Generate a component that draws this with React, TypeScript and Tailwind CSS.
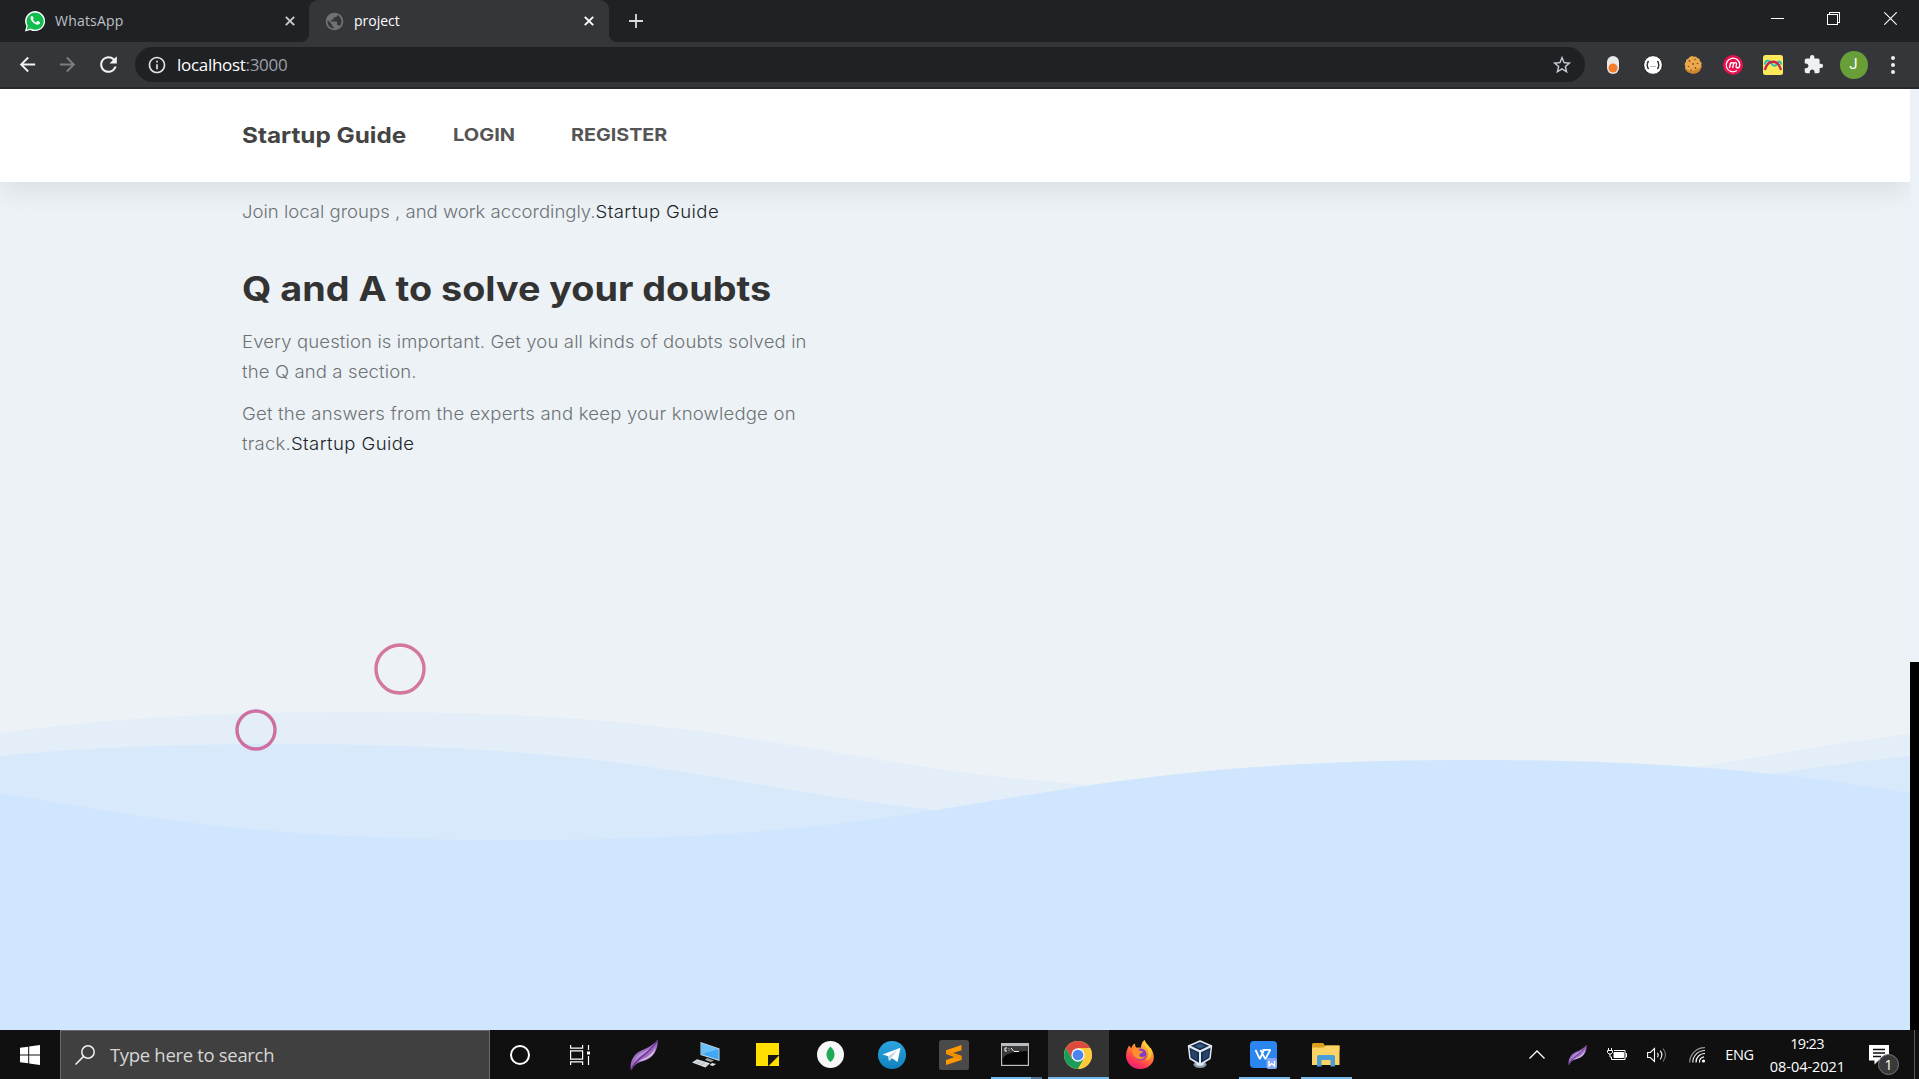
import type { ReactNode } from "react";
import { MdArrowBack, MdArrowForward, MdExtension, MdOutlineInfo, MdPublic, MdRefresh, MdStarBorder } from "react-icons/md";

function TabClose({ color }: { color: string }) {
  return (
    <svg viewBox="0 0 10 10" className="size-[10px]" stroke={color} strokeWidth="1.9">
      <path d="M.8 .8l8.4 8.4M9.2 .8L.8 9.2" />
    </svg>
  );
}

function TabStrip() {
  return (
    <div className="flex h-[42px] bg-[#202124]">
      <div className="flex w-[309px] items-center pl-[24px] pr-[14px]">
        <svg viewBox="0 0 22 22" className="size-[22px]">
          <path d="M1 21.5l1.4-5.4A10 10 0 1 1 6.300 19.900z" fill="#fff" />
          <path d="M2.700 19.700l1.1-4A8.600 8.600 0 1 1 6.700 18.600z" fill="#12bd4e" />
          <path d="M7.300 6.200c.5-.5 1.200-.4 1.500.2l.7 1.600c.2.500-.2 1-.6 1.400.7 1.400 1.800 2.400 3.200 3l1-1.100c.3-.4.700-.4 1.100-.2l1.500.8c.5.300.4.800.2 1.300-.6 1.400-2.300 1.700-3.600 1.200-2.700-1-4.700-2.900-5.600-5.300-.4-1.100-.1-2.200.6-2.900z" fill="#fff" />
        </svg>
        <span className="ml-[9px] flex-1 pb-px text-[14px] tracking-[0.2px] text-[#bdc1c6]">WhatsApp</span>
        <TabClose color="#c8cacd" />
      </div>
      <div className="relative flex w-[300px] items-center rounded-t-[9px] bg-[#35363a] pl-[15px] pr-[15px]">
        <svg viewBox="0 0 8 8" className="absolute bottom-0 -left-2 size-2"><path d="M8 0v8H0a8 8 0 0 0 8-8z" fill="#35363a" /></svg>
        <svg viewBox="0 0 8 8" className="absolute bottom-0 -right-2 size-2"><path d="M0 0v8h8a8 8 0 0 1-8-8z" fill="#35363a" /></svg>
        <MdPublic className="size-[21px] text-[#6f7174]" />
        <span className="ml-[9px] flex-1 pb-px text-[14px] text-white">project</span>
        <TabClose color="#fff" />
      </div>
      <div className="flex w-[54px] items-center justify-center">
        <svg viewBox="0 0 14 14" className="size-[14px]" stroke="#dadce0" strokeWidth="1.800"><path d="M7 0v14M0 7h14" /></svg>
      </div>
      <div className="ml-auto flex h-[36px] items-center">
        <div className="flex w-[56px] justify-center"><div className="h-px w-[13px] bg-white" /></div>
        <div className="flex w-[57px] justify-center">
          <svg viewBox="0 0 13 13" className="size-[13px]" fill="none" stroke="#fff" shapeRendering="crispEdges">
            <path d="M.5 2.500h10v10H.5zM2.500 2.500V.5h10v10h-2" />
          </svg>
        </div>
        <div className="flex w-[57px] justify-center">
          <svg viewBox="0 0 13 13" className="size-[13px]" stroke="#fff" strokeWidth="1.100"><path d="M.3 .3l12.400 12.400M12.700 .3L.3 12.700" /></svg>
        </div>
      </div>
    </div>
  );
}

function Cell({ w, children }: { w: string; children: ReactNode }) {
  return <div className={`flex shrink-0 items-center justify-center ${w}`}>{children}</div>;
}

function Toolbar() {
  return (
    <div className="flex h-[47px] border-b-[2px] border-[#27282b] bg-[#35363a] pt-[5px]">
      <div className="flex h-[35px] w-full items-center">
        <div className="flex w-[135px] items-center pl-[7px]">
          <Cell w="w-[40px]"><MdArrowBack className="size-[23px] text-[#f1f3f4]" /></Cell>
          <Cell w="w-[41px]"><MdArrowForward className="size-[23px] text-[#7c7e82]" /></Cell>
          <Cell w="w-[40px]"><MdRefresh className="size-[25px] text-[#f1f3f4]" /></Cell>
        </div>
        <div className="flex h-[35px] w-[1450px] items-center rounded-full bg-[#202124] pl-[12px] pr-[12px]">
          <MdOutlineInfo className="size-[20px] text-[#dfe1e5]" />
          <span className="ml-[10px] flex-1 text-[17px] tracking-[-0.300px] text-white">
            localhost<span className="text-[#9aa0a6]">:3000</span>
          </span>
          <MdStarBorder className="size-[22px] text-[#c6c9cd]" />
        </div>
        <div className="flex items-center pl-[7px]">
          <Cell w="w-[41px]">
            <svg viewBox="0 0 14 20" className="h-[20px] w-[14px]">
              <rect x="1" y="1" width="12" height="18" rx="6" fill="#e9e9ea" />
              <circle cx="7" cy="13" r="4.500" fill="#f57c2b" />
            </svg>
          </Cell>
          <Cell w="w-[40px]">
            <svg viewBox="0 0 20 20" className="size-[20px]" fill="none" stroke="#333">
              <circle cx="10" cy="10" r="9.400" fill="#fff" stroke="#1b1b1c" />
              <path d="M6 6.500q-1.500 0-1.500 1.500v1q0 1-1 1 1 0 1 1v1q0 1.500 1.500 1.500M14 6.500q1.500 0 1.500 1.500v1q0 1 1 1-1 0-1 1v1q0 1.500-1.500 1.500" strokeWidth="1.400" />
              <path d="M7.500 11.500h1M9.500 11.500h1M11.500 11.500h1" stroke="#777" />
            </svg>
          </Cell>
          <Cell w="w-[40px]">
            <svg viewBox="0 0 20 20" className="size-[20px]">
              <path d="M9 1.100l2 .7 2-.3 1.300 1.600 2.300 1 .4 2.200 1.800 1.700-.6 2.300.5 2-1.500 1.600-.4 2.200-2.200.8-1.500 1.600-2.200-.4-2.200.7-1.900-1.300-2.300-.4-.9-2-1.700-1.600.4-2.200-.8-2.200L2.900 7l.2-2.200L5.200 3.700 6.600 2z" fill="#eba94f" />
              <path d="M2 12.500c3 4 9 5.200 16.300-1l-1 3.500-2.500 2.600-4.300 1.100-4.700-1.200L2.600 15z" fill="#cf852c" />
              <g fill="#8a4a18"><circle cx="6.500" cy="6" r=".9" /><circle cx="12" cy="4.500" r=".8" /><circle cx="10" cy="9" r=".9" /><circle cx="14.500" cy="8.500" r=".8" /><circle cx="5.500" cy="11.500" r=".8" /><circle cx="12.500" cy="13" r=".9" /><circle cx="8" cy="15" r=".8" /></g>
            </svg>
          </Cell>
          <Cell w="w-[40px]">
            <svg viewBox="0 0 20 20" className="size-[20px]" fill="none" stroke="#fff" strokeLinecap="round">
              <circle cx="10" cy="10" r="10" fill="#e6124f" stroke="none" />
              <path d="M13.500 15.800A6.800 6.800 0 1 1 16.800 10q-.2 3-2.500 3-1.500-.2-1.200-1.800l.4-1.700q.2-1.800-1.200-1.800-1.500 0-2 2L9.600 13l.8-3.500q.3-1.800-1.100-1.800-1.400 0-2 2L6.500 13l1-5" strokeWidth="1.300" />
            </svg>
          </Cell>
          <Cell w="w-[40px]">
            <svg viewBox="0 0 20 20" className="size-[20px]" fill="none">
              <rect width="20" height="20" rx="2.500" fill="#fcea5b" />
              <path d="M2 9.500c0-4.500 4-4.800 6-1.500s5 4 6.500 0c1-2.500 3.500-2 3.500 1.500" stroke="#23c1ba" strokeWidth="2" />
              <path d="M1.800 15C5 4 15 4 18 15" stroke="#c2274f" strokeWidth="2.300" />
            </svg>
          </Cell>
          <Cell w="w-[40px]"><MdExtension className="size-[21px] text-[#eef0f2]" /></Cell>
          <Cell w="w-[41px]">
            <div className="flex size-[28px] items-center justify-center rounded-full bg-[#689f38] font-['Roboto'] text-[15px] text-white">J</div>
          </Cell>
          <Cell w="w-[37px]">
            <div className="flex flex-col gap-[3px]">
              <i className="size-[4px] rounded-full bg-[#eef0f2]" />
              <i className="size-[4px] rounded-full bg-[#eef0f2]" />
              <i className="size-[4px] rounded-full bg-[#eef0f2]" />
            </div>
          </Cell>
        </div>
      </div>
    </div>
  );
}

function Waves() {
  return (
    <svg viewBox="0 0 1910 941" className="absolute inset-0 h-[941px] w-[1910px]">
      <g transform="translate(0 -89)">
        <path d="M-598 792C-120 792-121 712 357 712S830 792 1308 792 1793 712 2271 712V1100H-598z" fill="#e3eef8" />
        <path d="M-676 824C-198 824-199 744 279 744S756 824 1234 824 1711 744 2189 744V1100H-676z" fill="#d8e9fb" />
        <path d="M-435 760C43 760 42 840 520 840S997 760 1475 760 1952 840 2430 840V1100H-435z" fill="#d0e6ff" />
      </g>
      <circle cx="400" cy="580" r="24" fill="none" stroke="#d3789c" strokeWidth="3.400" />
      <circle cx="256" cy="641" r="19" fill="none" stroke="#cd6fa0" strokeWidth="3.400" />
    </svg>
  );
}

function Page() {
  return (
    <main className="flex h-[941px] bg-[#ecf2f6] font-['Inter',sans-serif]">
      <div className="relative w-[1910px] overflow-hidden">
        <Waves />
        <header className="relative flex h-[93px] items-center bg-white pl-[242px] shadow-[0_8px_28px_rgba(0,0,0,0.085)]">
          <div className="w-[211px]"><span className="inline-block origin-left scale-x-[1.12] text-[21.700px] font-bold text-[#444]">Startup Guide</span></div>
          <div className="w-[117.500px]"><span className="inline-block origin-left scale-x-[1.13] text-[17.700px] font-bold text-[#555]">LOGIN</span></div>
          <span className="inline-block origin-left scale-x-[1.115] text-[17.700px] font-bold text-[#555]">REGISTER</span>
        </header>
        <section className="relative flex flex-col items-start pl-[242px] pt-[15px] text-[17.500px] font-light leading-[30px] text-[#6f7275]">
          <p className="origin-left scale-x-[1.06]">
            Join local groups , and work accordingly.<span className="tracking-[0.370px] text-[#212529]">Startup Guide</span>
          </p>
          <h2 className="mt-[41px] origin-left scale-x-[1.11] text-[34px] font-bold leading-[42px] text-[#333]">Q and A to solve your doubts</h2>
          <p className="mt-[17px] origin-left scale-x-[1.06] tracking-[0.110px]">
            Every question is important. Get you all kinds of doubts solved in
            <br />
            the Q and a section.
          </p>
          <p className="mt-[12px] origin-left scale-x-[1.06] tracking-[0.180px]">
            Get the answers from the experts and keep your knowledge on
            <br />
            track.<span className="tracking-[0.370px] text-[#212529]">Startup Guide</span>
          </p>
        </section>
      </div>
      <div className="flex w-[9px] flex-col">
        <div className="h-[573px] bg-[#ebf1f6]" />
        <div className="flex-1 bg-black" />
      </div>
    </main>
  );
}

function Feather({ className }: { className: string }) {
  return (
    <svg viewBox="0 0 28 30" className={className}>
      <path d="M.8 29.500C-.2 22 3 15 9.500 11.500 14 9 20 8 27.500 0c.8 8.500-3 15-8.500 18.500C13 22.500 6 20.500 1.600 29.700z" fill="#9b6cc0" />
      <path d="M4 22c2-6 6-8.500 10-10.500 4-2 8-3.500 11.500-7C18 13.500 10 14.500 4 22z" fill="#b794d4" />
      <path d="M7 21.500C14 19 22 15 25.500 7.500 25 15 18.500 20.500 7 21.500z" fill="#d3bde6" />
      <path d="M1 29.500C5 19 18 15 27.500 .5" stroke="#6b2f94" strokeWidth="1.300" fill="none" />
    </svg>
  );
}

const icons: Record<string, ReactNode> = {
  feather: <Feather className="h-[30px] w-[28px]" />,
  pc: (
    <svg viewBox="0 0 28 26" className="h-[26px] w-[28px]">
      <path d="M8.500 0L27.500 6.500V19L8.500 13z" fill="#d5dde3" />
      <path d="M9.300 1.200l17.400 6v10.600L9.300 12.200z" fill="#3fa9f5" />
      <path d="M9.300 1.200l17.400 6L9.300 12.200z" fill="#6cc0fa" />
      <path d="M15 16l7 2.500-3 1.500-6-2z" fill="#9aa6ae" />
      <path d="M5 17.300l13 4-4.500 4.200L0 20.500z" fill="#e3e8eb" />
      <path d="M20 21l4 1-3 2-3.500-1z" fill="#e3e8eb" />
      <path d="M3.500 18.800l12.500 4M2 19.800l12.500 4.200M9 18.400l-4 3.500M13 19.800l-4 3.500" stroke="#a9b3ba" strokeWidth=".6" />
    </svg>
  ),
  sticky: (
    <svg viewBox="0 0 23 23" className="mr-px size-[23px]"><path d="M0 0h23v12H12v11H0z" fill="#ffe000" /><path d="M23 12v.5L12.500 23H12V12z" fill="#161616" /><path d="M23 12.500V23H12.500z" fill="#ffe000" /></svg>
  ),
  mongo: (
    <svg viewBox="0 0 27 27" className="size-[27px]"><circle cx="13.500" cy="13.500" r="13.500" fill="#f7f7f7" /><path d="M13.500 5.500c5.500 5 5.200 11.500 0 15.500-5.200-4-5.500-10.500 0-15.500z" fill="#1fa855" /></svg>
  ),
  telegram: (
    <svg viewBox="0 0 28 28" className="size-[28px]">
      <defs><linearGradient id="tg" x1="0" y1="0" x2="0" y2="1"><stop offset="0" stopColor="#2ba5e0" /><stop offset="1" stopColor="#0f82be" /></linearGradient></defs>
      <circle cx="14" cy="14" r="14" fill="url(#tg)" />
      <path d="M4.500 13.500L22.500 6.800 19.500 21 14 17.300l-3 2.700-.8-4.800z" fill="#fff" />
      <path d="M10.200 15.200l9.300-6-6.500 7.500-2 3.300z" fill="#b9d6e6" />
    </svg>
  ),
  sublime: (
    <svg viewBox="0 0 30 30" className="size-[30px]">
      <rect width="30" height="30" rx="2.500" fill="#4a4a4a" />
      <path d="M7 10.200L22.500 5v5.200L13 13.300l9.500 3V20L7 25v-5l9.500-3.200L7 14z" fill="#ff9800" />
      <path d="M7 10.300l15.500 5.500V20L7 14z" fill="#f08f00" />
    </svg>
  ),
  cmd: (
    <svg viewBox="0 0 28 23" className="mr-[2px] h-[23px] w-[28px]">
      <rect width="28" height="23" fill="#b9bdbf" /><rect x="1.200" y="3" width="25.600" height="18.800" fill="#050505" />
      <path d="M1.200 3h25.600v5C16 8 5 10 1.200 16z" fill="#393b3c" />
      <path d="M4 5h2M4 8h2M4 5v3M8 5.500v.8M8 7.500v.6M10 5l2.500 3M13 8.500h5" stroke="#fff" strokeWidth="1" fill="none" />
    </svg>
  ),
  chrome: (
    <svg viewBox="0 0 28 28" className="size-[28px]">
      <circle cx="14" cy="14" r="14" fill="#fbcb3c" />
      <path d="M14 7h12.100A14 14 0 0 0 1.900 7L8 17.500z" fill="#db4a3e" />
      <path d="M1.900 7a14 14 0 0 0 12 21L20 17.500 8 17.500z" fill="#1c9c5a" />
      <path d="M14 28a14 14 0 0 0 12.100-21H14l6 10.500z" fill="#fbcb3c" />
      <circle cx="14" cy="14" r="6.700" fill="#f4f4f4" /><circle cx="14" cy="14" r="5.300" fill="#4a86f0" />
    </svg>
  ),
  firefox: (
    <svg viewBox="0 0 28 29" className="h-[29px] w-[28px]">
      <defs>
        <linearGradient id="fox" x1=".8" y1="0" x2=".25" y2="1"><stop offset="0" stopColor="#ffe14a" /><stop offset=".4" stopColor="#ff8a2b" /><stop offset=".75" stopColor="#ff3a52" /><stop offset="1" stopColor="#e41b7d" /></linearGradient>
      </defs>
      <path d="M3 5.500c.8 1 1.500 2 2.500 2.400C6 6 7 4.500 9 3.500c0 2.500.5 3.500 2 4.300 1.500-.4 3-.3 4 0 0-3 1-6 3.500-7.800.8 3 3 4 4.300 6C24 7.500 24 8 25 8.500c3 5 3.500 9 2 13C24.500 26.500 19.500 29 14 29 6 29 0 23 0 15.500 0 11.500 1.500 8.500 3 5.500z" fill="url(#fox)" />
      <circle cx="14.500" cy="14.500" r="6" fill="#7a3fc8" />
      <path d="M6 10c3-2.500 6-1.500 8 .7 1.500 0 3 .2 3 1-.5 1.500-3 1.600-3.800 3.500 1 2.500 4 2 6.300.8-2 4.500-8.500 4.500-11.200.3C6.800 14 6.500 12 6 10z" fill="#ff8f2e" />
      <path d="M17 3c2 3.500 5.500 6 5.500 11 0 3-1.500 5.500-3 6.500 6-1 7-6.500 5.500-12C22 7 20 3 18.500 0z" fill="#ffcf3d" opacity=".8" />
    </svg>
  ),
  vbox: (
    <svg viewBox="0 0 26 29" className="mr-[4px] h-[29px] w-[26px]" strokeLinejoin="round">
      <ellipse cx="13" cy="24.500" rx="6.500" ry="3.500" fill="#8e98a8" /><ellipse cx="13" cy="24" rx="4" ry="1.800" fill="#dfe4ea" />
      <path d="M13 1l11.500 5L23 18.500 13 24.500 3 18.500 1.500 6z" fill="#16304f" stroke="#e3e9f0" strokeWidth="1.500" />
      <path d="M1.500 6L13 11.500 24.500 6M13 11.500v13" stroke="#e3e9f0" strokeWidth="2" fill="none" />
      <path d="M8 6l5-2.200L18 6l-5 2.300z" fill="#3a5a82" /><path d="M4 10l6 3v7l-5-3zM22 10l-6 3v7l5-3z" fill="#24446e" />
    </svg>
  ),
  wps: (
    <svg viewBox="0 0 27 28" className="mr-[2px] h-[28px] w-[27px]" fill="none">
      <rect width="27" height="27" rx="4" fill="#2b86f0" />
      <path d="M5.500 8.800l4.300 9.400 4.200-9.400M10.500 8.800l4.800 9.400 5-9.400H12.500" stroke="#fff" strokeWidth="1.800" strokeLinejoin="bevel" />
      <rect x="16.500" y="17" width="10.500" height="11" rx="2" fill="#86a8f2" /><path d="M19 20v5l2.700-2.500 2.800 2.500v-5" stroke="#fff" strokeWidth="1.400" />
    </svg>
  ),
  folder: (
    <svg viewBox="0 0 28 24" className="h-[24px] w-[28px]">
      <path d="M0 1.500A1.500 1.500 0 0 1 1.500 0H11l2 2.500h14.500V8H0z" fill="#dba11c" /><path d="M0 4.500h11.500L14 2.500h13.500V22H0z" fill="#fcd364" />
      <path d="M5 23.500V14a2 2 0 0 1 2-2h14a2 2 0 0 1 2 2v9.500h-4.500V17h-9v6.500z" fill="#4a9ed8" />
    </svg>
  ),
};

const apps: { id: string; state?: "open" | "multi" | "active" }[] = [
  { id: "feather" }, { id: "pc" }, { id: "sticky" }, { id: "mongo" }, { id: "telegram" }, { id: "sublime" },
  { id: "cmd", state: "multi" }, { id: "chrome", state: "active" }, { id: "firefox" }, { id: "vbox" },
  { id: "wps", state: "open" }, { id: "folder", state: "open" },
];

function TaskApp({ id, state }: { id: string; state?: string }) {
  return (
    <div className="flex w-[62px] justify-center">
      <div className={`flex flex-col items-center ${state === "active" ? "w-[61px] bg-[#333]" : "w-[51px]"}`}>
        <div className="flex flex-1 items-center justify-center pt-[2px]">{icons[id]}</div>
        <div className={`flex h-[2px] w-full justify-end ${state ? "bg-[#76b9ed]" : ""}`}>
          {state === "multi" && <div className="w-[11px] bg-[#4a7599]" />}
        </div>
      </div>
    </div>
  );
}

function Taskbar() {
  return (
    <footer className="flex h-[49px] bg-[#101010] text-white">
      <Cell w="w-[60px]">
        <svg viewBox="0 0 20 20" className="size-[20px]" fill="#fff"><path d="M0 2.800L8.200 1.700V9.400H0zM9.200 1.500L20 0v9.400H9.200zM0 10.500h8.200v7.800L0 17.200zM9.200 10.500H20V20L9.200 18.500z" /></svg>
      </Cell>
      <div className="flex w-[430px] items-center border border-b-0 border-[#6b6b6b] bg-[#404040] pl-[14px]">
        <svg viewBox="0 0 20 20" className="size-[20px]" fill="none" stroke="#f0f0f0" strokeWidth="1.500"><circle cx="13" cy="7" r="6.200" /><path d="M8.600 11.400L.5 19.500" /></svg>
        <span className="ml-[15px] text-[18.500px] tracking-[-0.320px] text-[#d6d6d6]">Type here to search</span>
      </div>
      <Cell w="w-[60px]"><div className="size-[20px] rounded-full border-[2.500px] border-white" /></Cell>
      <Cell w="w-[63px]">
        <svg viewBox="0 0 20 20" className="mr-[3px] size-[20px]" fill="none" stroke="#fff" strokeWidth="1.200">
          <path d="M.6 0v3.200h12V0M.6 20v-3.200h12V20M.6 5.800h12v8.400H.6zM18.500 0v5M18.500 11v9" /><path d="M17 6.500h3v3h-3z" fill="#fff" stroke="none" />
        </svg>
      </Cell>
      {apps.map((a) => <TaskApp key={a.id} {...a} />)}
      <div className="ml-auto flex text-[15px]">
        <Cell w="w-[40px]"><svg viewBox="0 0 16 9" className="h-[9px] w-[16px]" fill="none" stroke="#fff" strokeWidth="1.300"><path d="M.5 8.500L8 1l7.500 7.500" /></svg></Cell>
        <Cell w="w-[40px]"><Feather className="h-[20px] w-[19px]" /></Cell>
        <Cell w="w-[40px]">
          <svg viewBox="0 0 20 13" className="h-[13px] w-[20px]" fill="none" stroke="#fff">
            <path d="M7 2.500h11v9H4.500V9M18.500 5.500h1v3.500h-1" /><path d="M7 4.500h9.500v5H7z" fill="#fff" />
            <path d="M1.500 0v2.500M4.500 0v2.500M.5 2.500h5v2L4 6H2L.5 4.500zM3 6v3h1.500" />
          </svg>
        </Cell>
        <Cell w="w-[40px]">
          <svg viewBox="0 0 20 16" className="h-[16px] w-[20px]" fill="none" stroke="#fff" strokeWidth="1.100">
            <path d="M.6 5.500h2.700L7.500 1.600v12.800L3.300 10.500H.6z" /><path d="M10.500 5.800q1.500 2.200 0 4.400M13.200 3.700q3.300 4.300 0 8.600" /><path d="M16 1.500q5 6.500 0 13" stroke="#777" />
          </svg>
        </Cell>
        <Cell w="w-[40px]">
          <svg viewBox="0 0 17 16" className="h-[16px] w-[17px]" fill="none" stroke="#fff" strokeWidth="1.200">
            <path d="M10.500 15.500A5 5 0 0 1 15 9.800" /><path d="M7 15.500A8.600 8.600 0 0 1 16 6.500" /><path d="M3.800 15.500A12 12 0 0 1 16 3.500" stroke="#ddd" /><path d="M.7 15.500A15 15 0 0 1 16 .7" stroke="#999" />
            <circle cx="14.500" cy="14" r="1.600" fill="#fff" stroke="none" />
          </svg>
        </Cell>
        <Cell w="w-[46px]"><span className="mr-px text-[14.500px] tracking-[-0.400px]">ENG</span></Cell>
        <div className="flex w-[88px] flex-col items-center pt-[2px] text-[14.500px] leading-[23px]">
          <span className="tracking-[-0.700px]">19:23</span>
          <span className="ml-px tracking-[-0.040px]">08-04-2021</span>
        </div>
        <div className="relative flex w-[63px] pl-[18px] pt-[15px]">
          <svg viewBox="0 0 20 20" className="size-[20px]"><path d="M0 0h20v15.500H9.500L5.500 19.500v-4H0z" fill="#fff" /><path d="M4 4.500h12M4 8h12M4 11.500h8" stroke="#101010" strokeWidth="1.300" /></svg>
          <div className="absolute top-[24px] left-[27px] flex size-[21px] items-center justify-center rounded-full border border-[#777] bg-[#3a3a3a] text-[14px] leading-none">1</div>
        </div>
        <div className="w-[5px] border-l border-[#5a5a5a]" />
      </div>
    </footer>
  );
}

export default function App() {
  return (
    <div className="flex h-[1079px] w-[1919px] flex-col overflow-hidden whitespace-nowrap font-['Open_Sans','Noto_Sans',sans-serif]">
      <TabStrip />
      <Toolbar />
      <Page />
      <Taskbar />
    </div>
  );
}
